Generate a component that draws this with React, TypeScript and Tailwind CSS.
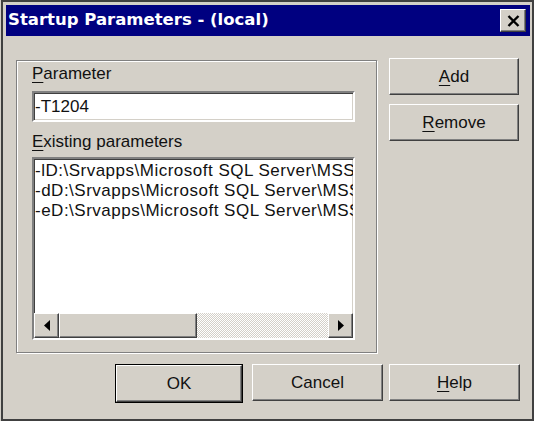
import type { ReactNode } from "react";

const raised =
  "border border-t-white border-l-white border-r-[#404040] border-b-[#404040] shadow-[inset_-1px_-1px_0_#808080]";
const sunken =
  "border-2 border-t-[#808080] border-l-[#808080] border-r-white border-b-white shadow-[inset_1px_1px_0_#404040,inset_-1px_-1px_0_#d4d0c8]";

function Btn({ children, w = "w-[130px]" }: { children: ReactNode; w?: string }) {
  return (
    <button
      className={`${raised} ${w} h-[37px] bg-[#d4d0c8] flex items-center justify-center text-[17px] text-[#111]`}
    >
      {children}
    </button>
  );
}

function Mn({ children }: { children: ReactNode }) {
  return <span className="underline underline-offset-[3px]">{children}</span>;
}

function Arrow({ dir }: { dir: "left" | "right" }) {
  return (
    <div className={`${raised} w-[25px] h-full bg-[#d4d0c8] flex items-center justify-center`}>
      <svg width="6" height="11" viewBox="0 0 6 11">
        {dir === "left" ? (
          <polygon points="6,0 6,11 0,5.5" fill="#000" />
        ) : (
          <polygon points="0,0 0,11 6,5.5" fill="#000" />
        )}
      </svg>
    </div>
  );
}

const rows = [
  "-lD:\\Srvapps\\Microsoft SQL Server\\MSSQL\\data\\mastlog.ldf",
  "-dD:\\Srvapps\\Microsoft SQL Server\\MSSQL\\data\\master.mdf",
  "-eD:\\Srvapps\\Microsoft SQL Server\\MSSQL\\log\\ERRORLOG",
];

export default function App() {
  return (
    <div
      className="w-[534px] h-[421px] bg-[#d4d0c8] pl-[1px] text-[#111]"
      style={{ fontFamily: '"Liberation Sans", Arial, sans-serif' }}
    >
      <div className="h-full border-2 border-[#404040] flex flex-col pt-[3px] pl-[3px] pr-[2px]">
        {/* Title bar */}
        <div className="h-[31px] bg-[#000080] flex items-center justify-between pl-[2px] pr-[4px]">
          <span
            className="text-white font-bold text-[16.5px] leading-none"
            style={{ fontFamily: '"DejaVu Sans", sans-serif' }}
          >
            Startup Parameters - (local)
          </span>
          <div className={`${raised} w-[26px] h-[23px] bg-[#d4d0c8] flex items-center justify-center`}>
            <svg width="13" height="12" viewBox="0 0 13 12">
              <path d="M1.5 1 L11.5 11 M11.5 1 L1.5 11" stroke="#000" strokeWidth="2.4" />
            </svg>
          </div>
        </div>

        {/* Body */}
        <div className="flex pt-[22px] pl-[10px] gap-[12px]">
          {/* Group box */}
          <div className="mt-[2px] w-[361px] h-[293px] border border-[#808080] shadow-[inset_1px_1px_0_#fff,1px_1px_0_#fff] pl-[15px] pt-[3px] flex flex-col">
            <div className="h-[20px] text-[17px] leading-[20px]">
              <Mn>P</Mn>arameter
            </div>
            <div className={`${sunken} mt-[7px] w-[323px] h-[31px] bg-white flex items-center pl-[1px] text-[17px]`}>
              -T1204
            </div>
            <div className="mt-[10px] h-[20px] text-[17px] leading-[20px]">
              <Mn>E</Mn>xisting parameters
            </div>
            <div className={`${sunken} mt-[5px] w-[323px] h-[183px] bg-white flex flex-col`}>
              <div className="flex-1 overflow-hidden pt-[2px] pl-[1px]">
                {rows.map((r) => (
                  <div key={r} className="h-[20px] text-[17px] leading-[20px] whitespace-nowrap tracking-[0.5px]">
                    {r}
                  </div>
                ))}
              </div>
              <div className="h-[25px] flex">
                <Arrow dir="left" />
                <div className={`${raised} w-[138px] h-full bg-[#d4d0c8]`} />
                <div className="flex-1 h-full bg-[image:repeating-conic-gradient(#d4d0c8_0_25%,#ffffff_0_50%)] bg-[length:2px_2px]" />
                <Arrow dir="right" />
              </div>
            </div>
          </div>

          {/* Right column */}
          <div className="flex flex-col gap-[9px]">
            <Btn>
              <Mn>A</Mn>dd
            </Btn>
            <Btn>
              <Mn>R</Mn>emove
            </Btn>
          </div>
        </div>

        {/* Bottom buttons */}
        <div className="flex pl-[109px] mt-[11px]">
          <div className="border border-black">
            <Btn w="w-[126px]">OK</Btn>
          </div>
          <div className="ml-[9px]">
            <Btn w="w-[131px]">Cancel</Btn>
          </div>
          <div className="ml-[6px]">
            <Btn w="w-[131px]">
              <Mn>H</Mn>elp
            </Btn>
          </div>
        </div>
      </div>
    </div>
  );
}
